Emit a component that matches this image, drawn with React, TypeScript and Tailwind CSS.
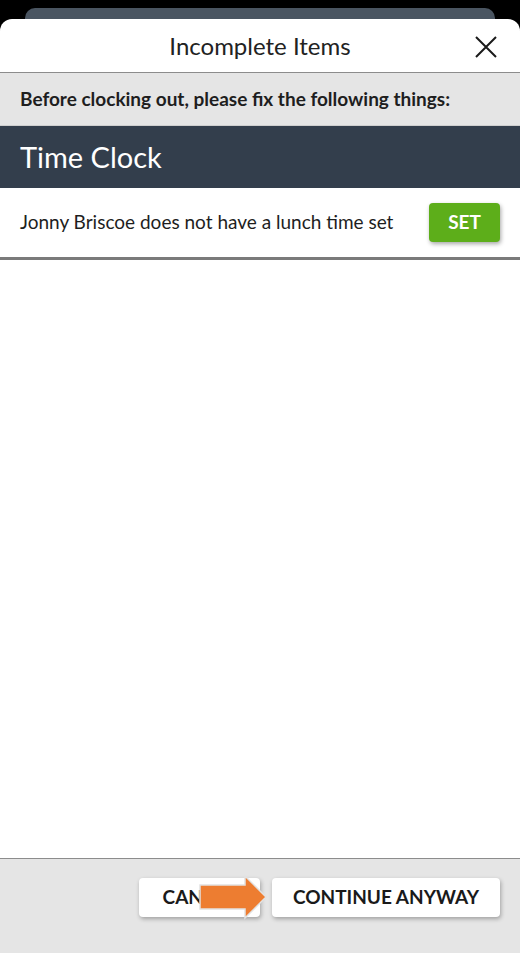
import React from "react";

const font = { fontFamily: "Lato, 'Open Sans', sans-serif" };

const CloseIcon = () => (
  <svg width="24" height="24" viewBox="0 0 24 24" fill="none" stroke="#1a1a1a" strokeWidth="2">
    <path d="M2 2L22 22M22 2L2 22" />
  </svg>
);

const Arrow = () => (
  <svg width="70" height="46" viewBox="0 0 70 46" className="absolute left-[198px] top-[15px]">
    <path
      d="M2 11H47V2L68 23L47 44V35H2Z"
      fill="#ed7d31"
      stroke="#e2e2e2"
      strokeWidth="1.5"
      strokeLinejoin="miter"
    />
  </svg>
);

export default function App() {
  return (
    <div className="flex h-[953px] w-[520px] flex-col bg-black" style={font}>
      <div className="px-[25px] pt-2">
        <div className="h-[11px] rounded-t-[10px] bg-[#4a5561]" />
      </div>
      <div className="flex flex-1 flex-col rounded-t-[12px] bg-white">
        <div className="relative flex h-[54px] items-center justify-center border-b border-[#8c8c8c] text-[24px] text-[#222]">
          Incomplete Items
          <button className="absolute right-[22px] top-[16px]">
            <CloseIcon />
          </button>
        </div>
        <div className="flex h-[53px] items-center border-b border-[#cfcfcf] bg-[#e5e5e5] px-5 text-[19px] font-bold text-[#1e1e1e]">
          Before clocking out, please fix the following things:
        </div>
        <div className="flex h-[62px] items-center bg-[#333e4c] px-5 text-[29px] text-white">
          Time Clock
        </div>
        <div className="flex h-[72px] items-center justify-between border-b-[3px] border-[#7a7a7a] pl-5 pr-5">
          <span className="text-[19px] text-[#1e1e1e]">
            Jonny Briscoe does not have a lunch time set
          </span>
          <button className="h-[39px] w-[71px] rounded-[4px] bg-[#5dae1a] text-[19px] font-bold text-white shadow-[1px_2px_4px_rgba(0,0,0,0.35)]">
            SET
          </button>
        </div>
        <div className="flex-1" />
        <div className="relative flex h-[95px] justify-end gap-3 border-t border-[#8c8c8c] bg-[#e5e5e5] px-5 pt-[19px]">
          <button className="h-[39px] w-[121px] rounded-[4px] bg-white text-[19px] font-bold text-[#1a1a1a] shadow-[1px_2px_4px_rgba(0,0,0,0.3)]">
            CANCEL
          </button>
          <button className="h-[39px] w-[228px] rounded-[4px] bg-white text-[19px] font-bold text-[#1a1a1a] shadow-[1px_2px_4px_rgba(0,0,0,0.3)]">
            CONTINUE ANYWAY
          </button>
          <Arrow />
        </div>
      </div>
    </div>
  );
}
